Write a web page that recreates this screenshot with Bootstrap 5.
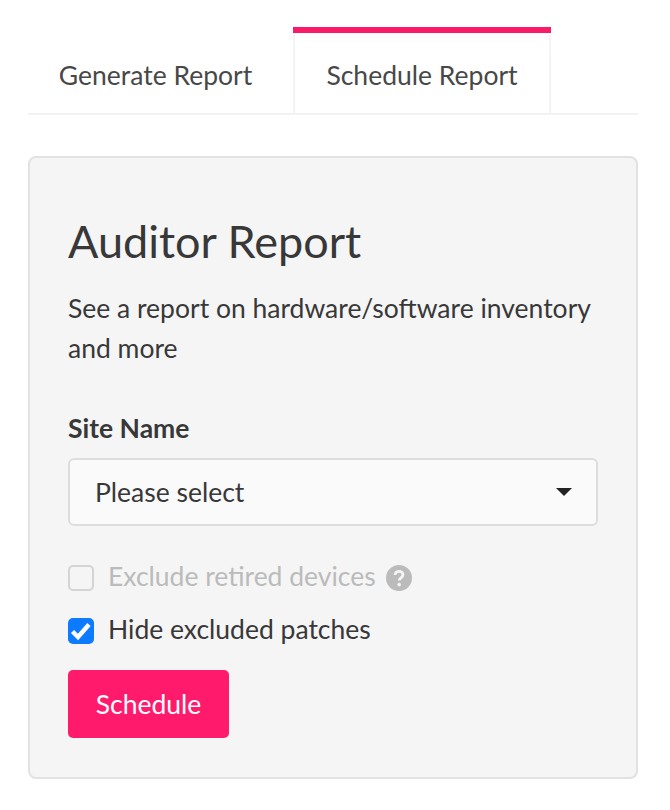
<!DOCTYPE html>
<html lang="en">
<head>
<meta charset="UTF-8">
<meta name="viewport" content="width=device-width, initial-scale=1.0">
<title>Auditor Report</title>
<link href="https://cdn.jsdelivr.net/npm/bootstrap@5.3.0/dist/css/bootstrap.min.css" rel="stylesheet">
<style>
body {
    font-family: "Lato", "Noto Sans", sans-serif;
    font-size: 26.5px;
    color: #383838;
    background: #fff;
}
.page-wrap {
    padding: 27px 32px 0 28px;
}
/* Tabs */
.report-tabs {
    border-bottom: 2px solid #f2f2f2;
    height: 88px;
    flex-wrap: nowrap;
}
.report-tabs .nav-link {
    height: 86px;
    margin: 0;
    padding: 6px 0 0;
    border: 0;
    border-radius: 0;
    color: #484848;
    font-size: 26.5px;
    line-height: 84px;
    text-align: center;
}
.tab-first { width: 265px; padding-right: 10px !important; }
.report-tabs .nav-link.active {
    position: relative;
    width: 258px;
    color: #484848;
    background: #fff;
    border-left: 2px solid #f4f4f4;
    border-right: 2px solid #f4f4f4;
}
.report-tabs .nav-link.active::before {
    content: "";
    position: absolute;
    top: 0;
    left: -2px;
    right: -2px;
    height: 6px;
    background: #f91a68;
}
/* Panel */
.report-panel {
    margin-top: 41px;
    height: 623px;
    padding: 53px 38px 38px;
    background: #f5f5f5;
    border: 2px solid #e2e2e2;
    border-radius: 8px;
}
.report-title {
    font-size: 45px;
    font-weight: 400;
    line-height: 60px;
    margin: 0 0 17px;
    color: #383838;
}
.report-desc {
    line-height: 40px;
    margin: 0 0 40px;
}
.site-label {
    font-weight: 700;
    line-height: 40px;
    margin: 0 0 10px;
    display: block;
}
.site-select {
    height: 68px;
    font-size: 26.5px;
    padding: 2px 60px 0 25px;
    color: #383838;
    background-color: #fafafa;
    border: 2px solid #ddd;
    border-radius: 6px;
    background-image: url("data:image/svg+xml,%3csvg xmlns='http://www.w3.org/2000/svg' viewBox='0 0 16 8'%3e%3cpath fill='%23222' d='M0 0h16L8 8z'/%3e%3c/svg%3e");
    background-size: 16px 8px;
    background-position: right 24px center;
}
.check-row {
    display: flex;
    align-items: center;
    gap: 14px;
    min-height: 26px;
    margin: 0;
    padding: 0;
    line-height: 40px;
}
.check-row .form-check-input {
    width: 26px;
    height: 26px;
    margin: 0;
    float: none;
    flex: none;
    background-color: #fafafa;
    border: 2px solid #ccc;
    border-radius: 5px;
    opacity: 1;
}
.check-row .form-check-input:checked {
    background-color: #0d7bff;
    border: 0;
    background-image: url("data:image/svg+xml,%3csvg xmlns='http://www.w3.org/2000/svg' viewBox='0 0 26 26'%3e%3cpath fill='none' stroke='%23fff' stroke-width='4.4' d='M4.5 13.5l5.5 5.5L21 6.5'/%3e%3c/svg%3e");
    background-size: 100%;
}
.check-row .form-check-label { color: #383838; line-height: 37px; padding-bottom: 3px; }
.check-disabled { margin-top: 32px; }
.check-row .form-check-input:disabled ~ .form-check-label { color: #bbb; opacity: 1; }
.check-row .form-check-input:disabled { background-color: #f5f5f5; border-color: #d4d4d4; opacity: 1; }
.check-second { margin-top: 13px; }
.help-icon { margin-left: -4px; flex: none; }
.btn-schedule {
    margin-top: 19px;
    width: 161px;
    height: 68px;
    padding: 2px 0 0;
    font-size: 26.5px;
    color: #fff;
    background: #ff1a6c;
    border: 0;
    border-radius: 5px;
}
</style>
</head>
<body>
<div class="page-wrap">
    <ul class="nav report-tabs">
        <li class="nav-item"><a class="nav-link tab-first" href="#">Generate Report</a></li>
        <li class="nav-item"><a class="nav-link active" href="#">Schedule Report</a></li>
    </ul>

    <div class="report-panel">
        <h1 class="report-title">Auditor Report</h1>
        <p class="report-desc">See a report on hardware/software inventory and more</p>

        <label class="site-label" for="siteName">Site Name</label>
        <select class="form-select site-select" id="siteName">
            <option>Please select</option>
        </select>

        <div class="form-check check-row check-disabled">
            <input class="form-check-input" type="checkbox" id="excludeRetired" disabled>
            <label class="form-check-label" for="excludeRetired">Exclude retired devices</label>
            <svg class="help-icon" width="26" height="26" viewBox="0 0 26 26">
                <circle cx="13" cy="13" r="13" fill="#bbb"/>
                <path d="M9 10c0-2.4 1.8-3.6 4-3.6s4 1.3 4 3.4c0 3-3.8 2.9-3.8 5.6" fill="none" stroke="#f5f5f5" stroke-width="2.8"/>
                <circle cx="13.2" cy="19.6" r="1.8" fill="#f5f5f5"/>
            </svg>
        </div>
        <div class="form-check check-row check-second">
            <input class="form-check-input" type="checkbox" id="hideExcluded" checked>
            <label class="form-check-label" for="hideExcluded">Hide excluded patches</label>
        </div>

        <button type="button" class="btn btn-schedule">Schedule</button>
    </div>
</div>
<script src="https://cdn.jsdelivr.net/npm/bootstrap@5.3.0/dist/js/bootstrap.bundle.min.js"></script>
</body>
</html>
